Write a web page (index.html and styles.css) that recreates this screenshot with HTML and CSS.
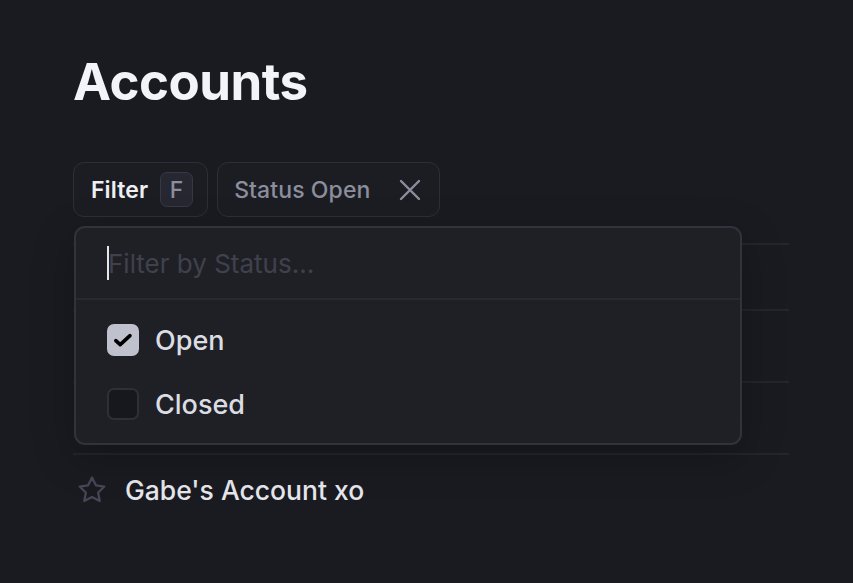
FILE: index.html
```html
<!DOCTYPE html>
<html lang="en">
<head>
<meta charset="utf-8">
<title>Accounts</title>
<link rel="stylesheet" href="styles.css">
</head>
<body>
<main class="page">
  <h1 class="title">Accounts</h1>
  <div class="toolbar">
    <button class="btn filter-btn">Filter <span class="kbd">F</span></button>
    <button class="btn chip">Status Open
      <svg class="chip-x" width="22" height="22" viewBox="0 0 22 22"><path d="M2 2 L20 20 M20 2 L2 20" stroke="currentColor" stroke-width="2.4" stroke-linecap="round"/></svg>
    </button>
  </div>
  <div class="table-area">
    <div class="rows">
      <div class="row row-first"></div>
      <div class="row"></div>
      <div class="row"></div>
      <div class="row">
        <svg class="star" width="32" height="32" viewBox="0 0 24 24"><path d="M12 2.6 L14.9 8.5 L21.3 9.4 L16.6 13.9 L17.8 20.3 L12 17.3 L6.2 20.3 L7.4 13.9 L2.7 9.4 L9.1 8.5 Z" fill="none" stroke="currentColor" stroke-width="1.7" stroke-linejoin="round"/></svg>
        <span class="row-name">Gabe's Account xo</span>
      </div>
    </div>
    <div class="dropdown">
      <div class="dd-search"><span class="caret"></span><span class="placeholder">Filter by Status...</span></div>
      <div class="dd-options">
        <label class="opt"><span class="cb cb-on"><svg width="20" height="20" viewBox="0 0 20 20"><path d="M2.8 10.6 L7.2 14.6 L17 5.6" fill="none" stroke="#000" stroke-width="3.6" stroke-linecap="round" stroke-linejoin="round"/></svg></span><span class="opt-label">Open</span></label>
        <label class="opt"><span class="cb"></span><span class="opt-label">Closed</span></label>
      </div>
    </div>
  </div>
</main>
</body>
</html>
```
FILE: styles.css
```css
* { box-sizing: border-box; }
html, body { margin: 0; height: 100%; }
body {
  background: #1a1b21;
  font-family: Inter, "Noto Sans", sans-serif;
  color: #eeeff3;
  overflow: hidden;
}
.page {
  padding: 50px 64px 0 73px;
}
.title {
  margin: 0;
  font-size: 51px;
  font-weight: 700;
  letter-spacing: -0.5px;
  line-height: 64px;
  color: #f3f4f7;
}
.toolbar {
  display: flex;
  gap: 9px;
  margin-top: 48px;
}
.btn {
  display: flex;
  align-items: center;
  height: 55px;
  border: 1.5px solid #2d2f38;
  border-radius: 11px;
  background: #1c1d23;
  font-family: inherit;
  font-size: 23px;
  letter-spacing: 0.1px;
  padding: 0 14px 0 17px;
}
.filter-btn {
  font-weight: 600;
  color: #eeeff3;
  gap: 12px;
}
.kbd {
  display: inline-flex;
  align-items: center;
  justify-content: center;
  width: 33px;
  height: 35px;
  border: 1.5px solid #363844;
  background: #262731;
  border-radius: 7px;
  color: #8b8e9d;
  font-weight: 500;
  font-size: 23px;
}
.chip {
  color: #8b8e9d;
  font-weight: 500;
  gap: 29px;
  padding: 0 18px 0 16px;
}
.chip-x { color: #8b8e9d; }
.table-area {
  position: relative;
  margin-top: 9px;
}
.rows {
  padding-top: 17px;
  width: 716px;
}
.row {
  height: 72px;
  border-top: 2px solid #24252d;
  display: flex;
  align-items: center;
}
.row-first { height: 66px; }
.star { color: #454755; margin-left: 3px; margin-right: 17px; }
.row-name {
  font-size: 26.5px;
  font-weight: 500;
  color: #e6e7ec;
}
.dropdown {
  position: absolute;
  left: 1px;
  top: 0;
  width: 668px;
  height: 219px;
  background: #1f2025;
  border: 2px solid #30323c;
  border-radius: 11px;
  box-shadow: 0 12px 40px rgba(0, 0, 0, 0.25);
  display: flex;
  flex-direction: column;
}
.dd-search {
  height: 72px;
  border-bottom: 2px solid #292a31;
  display: flex;
  align-items: center;
  padding-left: 31px;
}
.caret {
  width: 2px;
  height: 34px;
  background: #e6e6ea;
  margin-right: -1px;
}
.placeholder {
  font-size: 26px;
  color: #3f414d;
  font-weight: 400;
}
.dd-options {
  display: flex;
  flex-direction: column;
  padding: 8px 0 0 31px;
}
.opt {
  display: flex;
  align-items: center;
  gap: 16px;
  height: 64px;
}
.cb {
  width: 32px;
  height: 32px;
  border-radius: 7px;
  border: 2px solid #2d2f39;
  background: #17181e;
  display: flex;
  align-items: center;
  justify-content: center;
}
.cb-on {
  background: #bfc1cc;
  border-color: #bfc1cc;
}
.opt-label {
  font-size: 27px;
  font-weight: 500;
  color: #dcdde3;
}
```
